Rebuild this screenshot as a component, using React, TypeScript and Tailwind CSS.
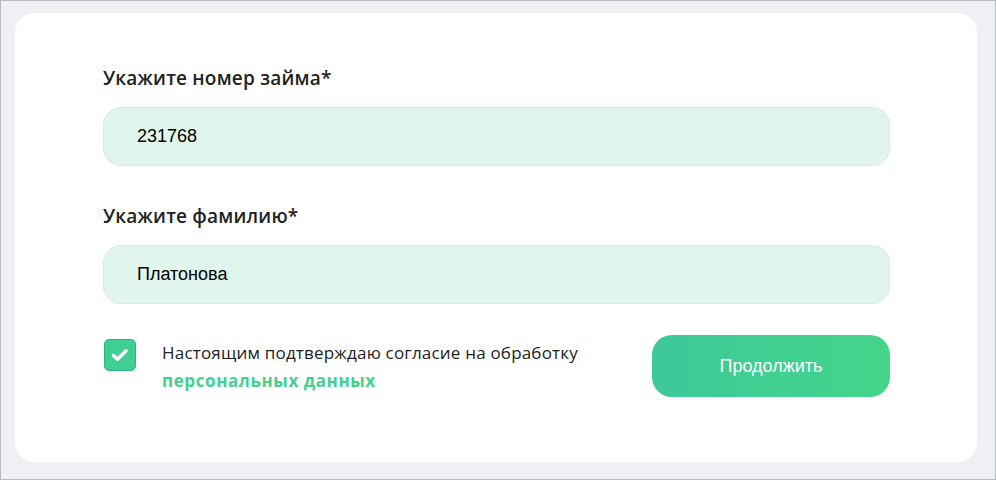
import React from 'react';

// Loan lookup form: loan number + surname, consent checkbox and submit button
const fields = [
  { id: 'loan', label: 'Укажите номер займа*', value: '231768' },
  { id: 'surname', label: 'Укажите фамилию*', value: 'Платонова' },
];

function CheckIcon() {
  return (
    <svg width="20" height="18" viewBox="0 0 20 18" fill="none">
      <path d="M3.5 9.5l4 3.8 8.5-8.6" stroke="white" strokeWidth="3.4" strokeLinecap="round" strokeLinejoin="round" />
    </svg>
  );
}

export default function App() {
  return (
    <div className="w-[996px] h-[480px] border border-[#b9bcc2] bg-[#eef0f4] pt-[12px] pl-[14px] pr-[18px] pb-[17px]">
      <div className="h-full bg-white rounded-[20px] pt-[53px] pl-[88px] pr-[87px] font-['Open_Sans',sans-serif]">
        {fields.map((f, i) => (
          <div key={f.id} className={i > 0 ? 'mt-[38px]' : ''}>
            <label className="block text-[19px] leading-[24px] font-semibold text-[#222222] tracking-[0.2px]">{f.label}</label>
            <div className="mt-[17px] h-[59px] rounded-[18px] bg-[#e0f6ec] border border-[#d6ebe0] flex items-center pl-[33px]">
              <span className="text-[18px] text-black font-['Liberation_Sans',Arial,sans-serif]">{f.value}</span>
            </div>
          </div>
        ))}

        <div className="mt-[31px] flex items-start justify-between">
          <div className="flex items-start pt-[4px]">
            <div className="ml-[1px] w-[32px] h-[32px] rounded-[5px] bg-[#3ecf94] border border-[#2fb57e] flex items-center justify-center">
              <CheckIcon />
            </div>
            <div className="ml-[26px] text-[17px] leading-[28px] text-[#222222] tracking-[0.2px]">
              <div>Настоящим подтверждаю согласие на обработку</div>
              <a className="font-bold text-[#45d08e] tracking-[0.6px]">персональных данных</a>
            </div>
          </div>
          <button className="w-[238px] h-[62px] rounded-[20px] bg-gradient-to-r from-[#3dc99a] to-[#44d589] text-white text-[18px] font-['Liberation_Sans',Arial,sans-serif]">
            Продолжить
          </button>
        </div>
      </div>
    </div>
  );
}
